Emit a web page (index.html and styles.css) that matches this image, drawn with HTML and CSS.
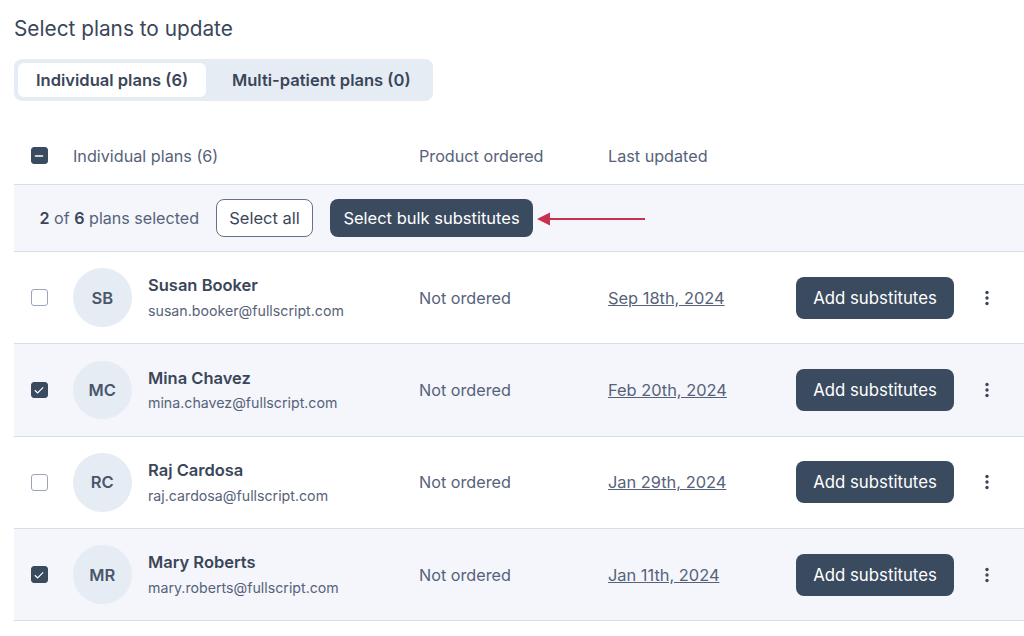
FILE: index.html
```html
<!DOCTYPE html>
<html lang="en">
<head>
    <meta charset="UTF-8">
    <meta name="viewport" content="width=device-width, initial-scale=1.0">
    <title>Select plans to update</title>
    <link rel="stylesheet" href="styles.css">
</head>
<body>
    <div class="page">
        <h1 class="title">Select plans to update</h1>

        <div class="tabs">
            <div class="tab active">Individual plans (6)</div>
            <div class="tab">Multi-patient plans (0)</div>
        </div>

        <div class="table-head row-grid">
            <span class="box dark">
                <svg width="10" height="10" viewBox="0 0 10 10"><path d="M1.500 5h7" stroke="#fff" stroke-width="1.600" stroke-linecap="round"/></svg>
            </span>
            <span>Individual plans (6)</span>
            <span>Product ordered</span>
            <span>Last updated</span>
        </div>

        <div class="bulk-bar">
            <span class="bulk-count"><b>2</b> of <b>6</b> plans selected</span>
            <button class="btn outline">Select all</button>
            <button class="btn solid bulk">Select bulk substitutes</button>
            <svg class="arrow" width="108" height="16" viewBox="0 0 108 16">
                <path d="M13 8h95" stroke="#c9304d" stroke-width="2"/>
                <path d="M0 8l13-6.500v13z" fill="#c9304d"/>
            </svg>
        </div>

        <div class="row row-grid">
            <span class="box"></span>
            <div class="person">
                <div class="avatar">SB</div>
                <div>
                    <div class="name">Susan Booker</div>
                    <div class="email">susan.booker@fullscript.com</div>
                </div>
            </div>
            <span>Not ordered</span>
            <a class="date">Sep 18th, 2024</a>
            <div class="actions">
                <button class="btn solid add">Add substitutes</button>
                <svg class="dots" width="6" height="16" viewBox="0 0 6 16"><circle cx="3" cy="2.500" r="1.700"/><circle cx="3" cy="8" r="1.700"/><circle cx="3" cy="13.500" r="1.700"/></svg>
            </div>
        </div>

        <div class="row row-grid selected">
            <span class="box dark">
                <svg width="12" height="12" viewBox="0 0 12 12"><path d="M1.800 6.300l2.800 2.700 5.600-5.600" fill="none" stroke="#fff" stroke-width="1.200"/></svg>
            </span>
            <div class="person">
                <div class="avatar">MC</div>
                <div>
                    <div class="name">Mina Chavez</div>
                    <div class="email">mina.chavez@fullscript.com</div>
                </div>
            </div>
            <span>Not ordered</span>
            <a class="date">Feb 20th, 2024</a>
            <div class="actions">
                <button class="btn solid add">Add substitutes</button>
                <svg class="dots" width="6" height="16" viewBox="0 0 6 16"><circle cx="3" cy="2.500" r="1.700"/><circle cx="3" cy="8" r="1.700"/><circle cx="3" cy="13.500" r="1.700"/></svg>
            </div>
        </div>

        <div class="row row-grid">
            <span class="box"></span>
            <div class="person">
                <div class="avatar">RC</div>
                <div>
                    <div class="name">Raj Cardosa</div>
                    <div class="email">raj.cardosa@fullscript.com</div>
                </div>
            </div>
            <span>Not ordered</span>
            <a class="date">Jan 29th, 2024</a>
            <div class="actions">
                <button class="btn solid add">Add substitutes</button>
                <svg class="dots" width="6" height="16" viewBox="0 0 6 16"><circle cx="3" cy="2.500" r="1.700"/><circle cx="3" cy="8" r="1.700"/><circle cx="3" cy="13.500" r="1.700"/></svg>
            </div>
        </div>

        <div class="row row-grid selected">
            <span class="box dark">
                <svg width="12" height="12" viewBox="0 0 12 12"><path d="M1.800 6.300l2.800 2.700 5.600-5.600" fill="none" stroke="#fff" stroke-width="1.200"/></svg>
            </span>
            <div class="person">
                <div class="avatar">MR</div>
                <div>
                    <div class="name">Mary Roberts</div>
                    <div class="email">mary.roberts@fullscript.com</div>
                </div>
            </div>
            <span>Not ordered</span>
            <a class="date">Jan 11th, 2024</a>
            <div class="actions">
                <button class="btn solid add">Add substitutes</button>
                <svg class="dots" width="6" height="16" viewBox="0 0 6 16"><circle cx="3" cy="2.500" r="1.700"/><circle cx="3" cy="8" r="1.700"/><circle cx="3" cy="13.500" r="1.700"/></svg>
            </div>
        </div>
    </div>
</body>
</html>
```

FILE: styles.css
```css
* {
    box-sizing: border-box;
}
body {
    margin: 0;
    background: #fff;
    font-family: Inter, "Open Sans", sans-serif;
    color: #3a4659;
    overflow: hidden;
}
.page {
    padding: 17px 0 0 14px;
    height: 636px;
}
.title {
    margin: 0;
    font-size: 20.800px;
    line-height: 24px;
    font-weight: 400;
}
.tabs {
    display: inline-flex;
    margin-top: 18px;
    padding: 4px;
    width: 419px;
    height: 42px;
    background: #e6ecf4;
    border-radius: 8px;
}
.tab {
    font-size: 16.550px;
    font-weight: 600;
    line-height: 34px;
    padding: 0 18px;
    white-space: nowrap;
}
.tab.active {
    width: 188px;
    background: #fff;
    border-radius: 6px;
    margin-right: 8px;
}
.row-grid {
    display: grid;
    grid-template-columns: 59px 346px 189px 188px 1fr;
    align-items: center;
}
.table-head {
    margin-top: 29px;
    height: 55px;
    padding-bottom: 3px;
    font-size: 16.200px;
    color: #56627a;
    border-bottom: 1px solid #d5dee9;
}
.box {
    display: flex;
    align-items: center;
    justify-content: center;
    width: 16.500px;
    height: 16.500px;
    margin-left: 17px;
    background: #fff;
    border: 1px solid #9aa5b8;
    border-radius: 3px;
}
.box.dark {
    background: #3a4a5f;
    border-color: #3a4a5f;
}
.bulk-bar {
    display: flex;
    align-items: center;
    height: 67px;
    padding-left: 25.500px;
    background: #f4f6fb;
    border-bottom: 1px solid #d5dee9;
}
.bulk-count {
    font-size: 16.100px;
    color: #56627a;
    width: 176.500px;
}
.bulk-count b {
    font-weight: 600;
    color: #3a4659;
}
.btn {
    font-family: inherit;
    border-radius: 8px;
    white-space: nowrap;
    cursor: pointer;
}
.btn.outline {
    width: 97px;
    height: 38px;
    font-size: 16.500px;
    background: #fff;
    color: #3a4659;
    border: 1px solid #667288;
}
.btn.solid {
    background: #3a4a5f;
    color: #fff;
    border: none;
}
.bulk {
    width: 203px;
    height: 38px;
    margin-left: 17px;
    font-size: 16.500px;
}
.arrow {
    margin-left: 4px;
    margin-top: 2px;
}
.row {
    height: 92.330px;
    font-size: 16.200px;
    color: #56627a;
    border-bottom: 1px solid #d5dee9;
}
.selected {
    background: #f4f6fb;
}
.person {
    display: flex;
    align-items: center;
    gap: 16.500px;
}
.avatar {
    width: 58.500px;
    height: 58.500px;
    border-radius: 50%;
    background: #e6ecf4;
    display: flex;
    align-items: center;
    justify-content: center;
    font-size: 16.500px;
    font-weight: 600;
    color: #4a566b;
}
.name {
    font-size: 16.500px;
    font-weight: 600;
    line-height: 20px;
    color: #3a4659;
}
.email {
    margin-top: 6.500px;
    font-size: 14.200px;
    line-height: 18px;
    color: #56627a;
}
.date {
    font-size: 16.400px;
    color: #56627a;
    text-decoration: underline;
    justify-self: start;
}
.actions {
    display: flex;
    align-items: center;
}
.add {
    width: 158px;
    height: 42px;
    font-size: 16.800px;
}
.dots {
    margin-left: 30px;
    fill: #3a4659;
}
```
